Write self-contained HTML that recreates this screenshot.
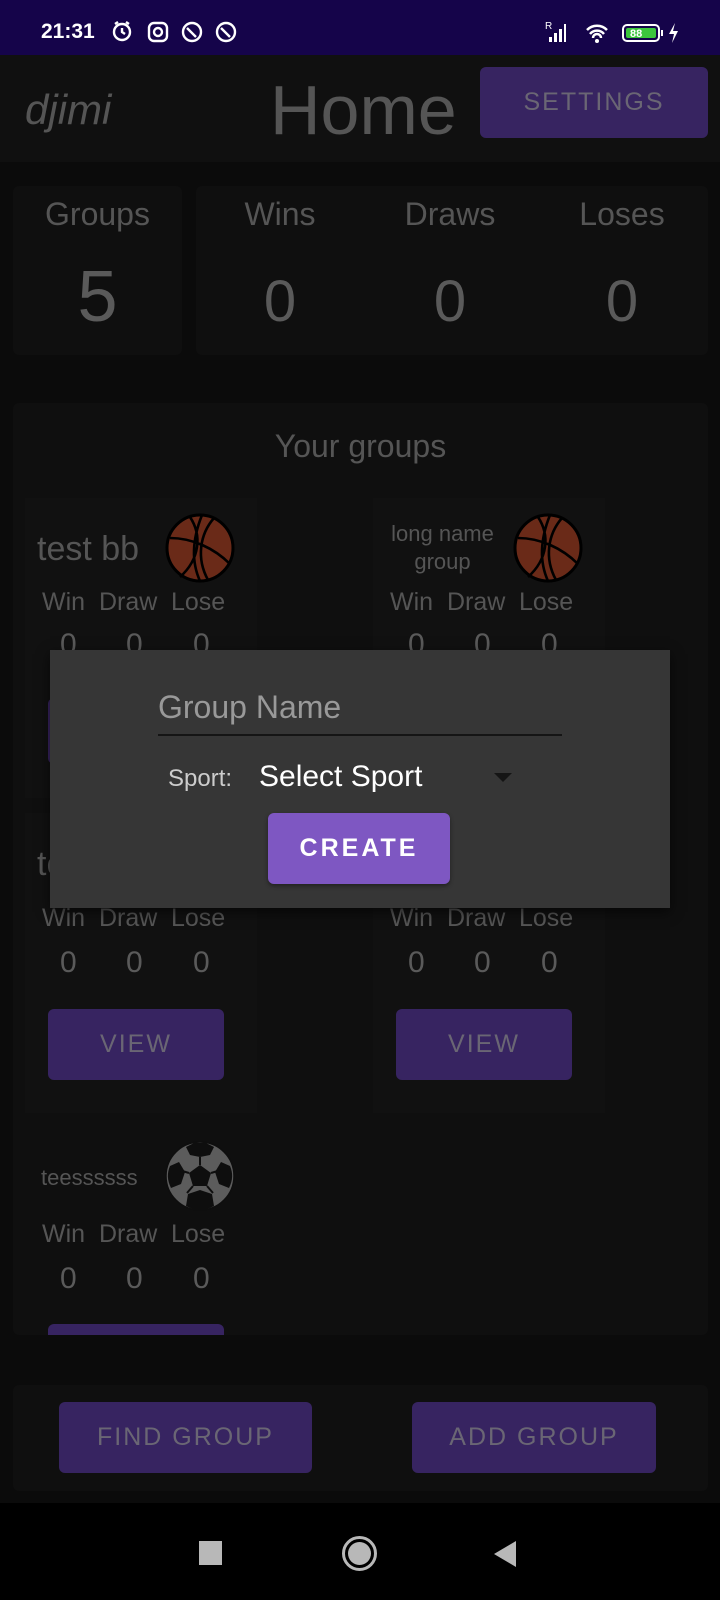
<!DOCTYPE html>
<html><head><meta charset="utf-8"><style>
*{margin:0;padding:0;box-sizing:border-box}
body{width:720px;height:1600px;background:#0b0b0b;font-family:"Liberation Sans",sans-serif;position:relative;overflow:hidden;color:#5a5a5a}
.a{position:absolute}
.c{text-align:center}
.btn{position:absolute;background:#372461;border-radius:6px;color:#6a6674;font-size:25px;letter-spacing:2px;display:flex;align-items:center;justify-content:center}
.card{position:absolute;background:#0f0f0f;border-radius:6px}
.lbl{font-size:25px;color:#555}
</style></head><body>
<div class="a" style="left:0;top:0;width:720px;height:55px;background:#15044a"></div>
<div class="a" style="left:41px;top:20px;font-size:21px;font-weight:bold;color:#fff">21:31</div>
<svg class="a" style="left:110px;top:18px" width="140" height="28" viewBox="0 0 140 28">
<g fill="none" stroke="#fff" stroke-width="2.4">
<circle cx="12" cy="14" r="8"/><path d="M12 10v4l3 2M5 6l3-2M19 6l-3-2"/>
<rect x="39" y="5" width="18" height="18" rx="5"/><circle cx="48" cy="14" r="4"/>
<circle cx="82" cy="14" r="9"/><path d="M77 10l9 9"/>
<circle cx="116" cy="14" r="9"/><path d="M111 10l9 9"/></g></svg>
<svg class="a" style="left:545px;top:20px" width="150" height="26" viewBox="0 0 150 26">
<text x="0" y="9" font-size="10" fill="#fff" font-family="Liberation Sans">R</text>
<path d="M4 22h3v-5H4zM9 22h3v-9H9zM14 22h3v-13h-3zM19 22h2V4h-2z" fill="#fff"/>
<path d="M42 10a14 14 0 0 1 20 0M45 14a9 9 0 0 1 14 0M48 18a4 4 0 0 1 8 0" stroke="#fff" stroke-width="2.5" fill="none"/><circle cx="52" cy="21" r="2" fill="#fff"/>
<rect x="78" y="5" width="36" height="16" rx="4" fill="none" stroke="#fff" stroke-width="2"/>
<rect x="81" y="8" width="30" height="10" rx="2" fill="#3cc63c"/>
<text x="85" y="17" font-size="11" fill="#fff" font-family="Liberation Sans" font-weight="bold">88</text>
<rect x="116" y="10" width="2" height="6" fill="#fff"/>
<path d="M130 3l-6 11h5l-2 9 6-12h-5z" fill="#fff"/></svg>

<div class="a" style="left:0;top:55px;width:720px;height:107px;background:#101010"></div>
<div class="a" style="left:25px;top:86px;font-size:42px;font-style:italic;color:#555">djimi</div>
<div class="a" style="left:270px;top:70px;font-size:70px;color:#555">Home</div>
<div class="btn" style="left:480px;top:67px;width:228px;height:71px;font-size:25px">SETTINGS</div>

<div class="card" style="left:13px;top:186px;width:169px;height:169px"></div>
<div class="card" style="left:196px;top:186px;width:512px;height:169px"></div>
<div class="a c lbl" style="left:13px;top:196px;width:169px;font-size:32px">Groups</div>
<div class="a c" style="left:13px;top:256px;width:169px;font-size:72px">5</div>
<div class="a c lbl" style="left:200px;top:196px;width:160px;font-size:32px">Wins</div>
<div class="a c lbl" style="left:370px;top:196px;width:160px;font-size:32px">Draws</div>
<div class="a c lbl" style="left:542px;top:196px;width:160px;font-size:32px">Loses</div>
<div class="a c" style="left:200px;top:268px;width:160px;font-size:58px">0</div>
<div class="a c" style="left:370px;top:268px;width:160px;font-size:58px">0</div>
<div class="a c" style="left:542px;top:268px;width:160px;font-size:58px">0</div>

<div class="card" style="left:13px;top:403px;width:695px;height:932px;overflow:hidden">
<div class="a c" style="left:0;top:25px;width:695px;font-size:32px;color:#555">Your groups</div>
<div class="a" style="left:12px;top:95px;width:232px;height:300px;background:#111"></div>
<div class="a" style="left:360px;top:95px;width:232px;height:300px;background:#111"></div>
<div class="a" style="left:12px;top:410px;width:232px;height:300px;background:#111"></div>
<div class="a" style="left:360px;top:410px;width:232px;height:300px;background:#111"></div>
</div>

<!-- card 1 -->
<div class="a" style="left:37px;top:530px;font-size:34px;color:#555">test bb</div>
<svg class="a" style="left:164px;top:512px" width="72" height="72" viewBox="0 0 72 72"><circle cx="36" cy="36" r="33" fill="#6a2a18" stroke="#000" stroke-width="3"/><path d="M26 5c12 18 10 42-10 60M50 6c-14 16-18 40-6 62M6 26c22 0 44 10 60 26M38 3c-8 20-12 44-2 66" stroke="#000" stroke-width="2.6" fill="none"/></svg>
<div class="a lbl" style="left:42px;top:588px">Win</div><div class="a lbl" style="left:99px;top:588px">Draw</div><div class="a lbl" style="left:171px;top:588px">Lose</div>
<div class="a" style="left:60px;top:628px;font-size:30px">0</div><div class="a" style="left:126px;top:628px;font-size:30px">0</div><div class="a" style="left:193px;top:628px;font-size:30px">0</div>
<div class="btn" style="left:48px;top:698px;width:176px;height:66px"></div>
<!-- card 2 -->
<div class="a c" style="left:380px;top:520px;width:125px;font-size:22px;line-height:28px;color:#555">long name group</div>
<svg class="a" style="left:512px;top:512px" width="72" height="72" viewBox="0 0 72 72"><circle cx="36" cy="36" r="33" fill="#6a2a18" stroke="#000" stroke-width="3"/><path d="M26 5c12 18 10 42-10 60M50 6c-14 16-18 40-6 62M6 26c22 0 44 10 60 26M38 3c-8 20-12 44-2 66" stroke="#000" stroke-width="2.6" fill="none"/></svg>
<div class="a lbl" style="left:390px;top:588px">Win</div><div class="a lbl" style="left:447px;top:588px">Draw</div><div class="a lbl" style="left:519px;top:588px">Lose</div>
<div class="a" style="left:408px;top:628px;font-size:30px">0</div><div class="a" style="left:474px;top:628px;font-size:30px">0</div><div class="a" style="left:541px;top:628px;font-size:30px">0</div>
<!-- row 2 -->
<div class="a" style="left:37px;top:845px;font-size:34px;color:#555">test</div>
<div class="a lbl" style="left:42px;top:904px">Win</div><div class="a lbl" style="left:99px;top:904px">Draw</div><div class="a lbl" style="left:171px;top:904px">Lose</div>
<div class="a" style="left:60px;top:946px;font-size:30px">0</div><div class="a" style="left:126px;top:946px;font-size:30px">0</div><div class="a" style="left:193px;top:946px;font-size:30px">0</div>
<div class="btn" style="left:48px;top:1009px;width:176px;height:71px">VIEW</div>
<div class="a lbl" style="left:390px;top:904px">Win</div><div class="a lbl" style="left:447px;top:904px">Draw</div><div class="a lbl" style="left:519px;top:904px">Lose</div>
<div class="a" style="left:408px;top:946px;font-size:30px">0</div><div class="a" style="left:474px;top:946px;font-size:30px">0</div><div class="a" style="left:541px;top:946px;font-size:30px">0</div>
<div class="btn" style="left:396px;top:1009px;width:176px;height:71px">VIEW</div>
<!-- row 3 -->
<div class="a" style="left:41px;top:1165px;font-size:22px;color:#555">teessssss</div>
<svg class="a" style="left:164px;top:1140px" width="72" height="72" viewBox="0 0 72 72"><circle cx="36" cy="36" r="34" fill="#5c5c5c"/><g fill="#0e0e0e"><path d="M36 25l11 8-4 13H29l-4-13z"/><path d="M22 7l8-4h12l8 4-4 8-10 2-10-2z"/><path d="M6 26l9-4 6 10-4 12-10 4c-4-8-4-15-1-22z"/><path d="M66 26l-9-4-6 10 4 12 10 4c4-8 4-15 1-22z"/><path d="M22 66l2-12 12-4 12 4 2 12c-9 5-19 5-28 0z"/></g><g stroke="#0e0e0e" stroke-width="2"><path d="M36 25V17M47 33l10-3M43 46l6 7M29 46l-6 7M25 33l-10-3"/></g><circle cx="36" cy="36" r="34" fill="none" stroke="#0e0e0e" stroke-width="1.5"/></svg>
<div class="a lbl" style="left:42px;top:1220px">Win</div><div class="a lbl" style="left:99px;top:1220px">Draw</div><div class="a lbl" style="left:171px;top:1220px">Lose</div>
<div class="a" style="left:60px;top:1262px;font-size:30px">0</div><div class="a" style="left:126px;top:1262px;font-size:30px">0</div><div class="a" style="left:193px;top:1262px;font-size:30px">0</div>
<div class="a" style="left:48px;top:1324px;width:176px;height:11px;background:#372461;border-radius:6px 6px 0 0"></div>

<!-- dialog -->
<div class="a" style="left:50px;top:650px;width:620px;height:258px;background:#363636;box-shadow:0 4px 12px rgba(0,0,0,.6)"></div>
<div class="a" style="left:158px;top:689px;font-size:32px;color:#999">Group Name</div>
<div class="a" style="left:158px;top:734px;width:404px;height:2px;background:#151515"></div>
<div class="a" style="left:168px;top:765px;font-size:24px;color:#ccc">Sport:</div>
<div class="a" style="left:259px;top:760px;font-size:30px;color:#fff">Select Sport</div>
<div class="a" style="left:494px;top:773px;width:0;height:0;border-left:9px solid transparent;border-right:9px solid transparent;border-top:9px solid #151515"></div>
<div class="a" style="left:268px;top:813px;width:182px;height:71px;background:#7e57c2;border-radius:6px;color:#fff;font-size:25px;font-weight:bold;letter-spacing:3px;display:flex;align-items:center;justify-content:center;box-shadow:0 2px 4px rgba(0,0,0,.4)">CREATE</div>

<div class="card" style="left:13px;top:1385px;width:695px;height:106px"></div>
<div class="btn" style="left:59px;top:1402px;width:253px;height:71px">FIND GROUP</div>
<div class="btn" style="left:412px;top:1402px;width:244px;height:71px">ADD GROUP</div>

<div class="a" style="left:0;top:1503px;width:720px;height:97px;background:#000"></div>
<div class="a" style="left:199px;top:1541px;width:23px;height:24px;background:#b8b8b8"></div>
<div class="a" style="left:342px;top:1536px;width:35px;height:35px;border:3px solid #b8b8b8;border-radius:50%;padding:3px"><div style="width:100%;height:100%;background:#b8b8b8;border-radius:50%"></div></div>
<div class="a" style="left:494px;top:1541px;width:0;height:0;border-top:13px solid transparent;border-bottom:13px solid transparent;border-right:22px solid #b8b8b8"></div>
</body></html>
